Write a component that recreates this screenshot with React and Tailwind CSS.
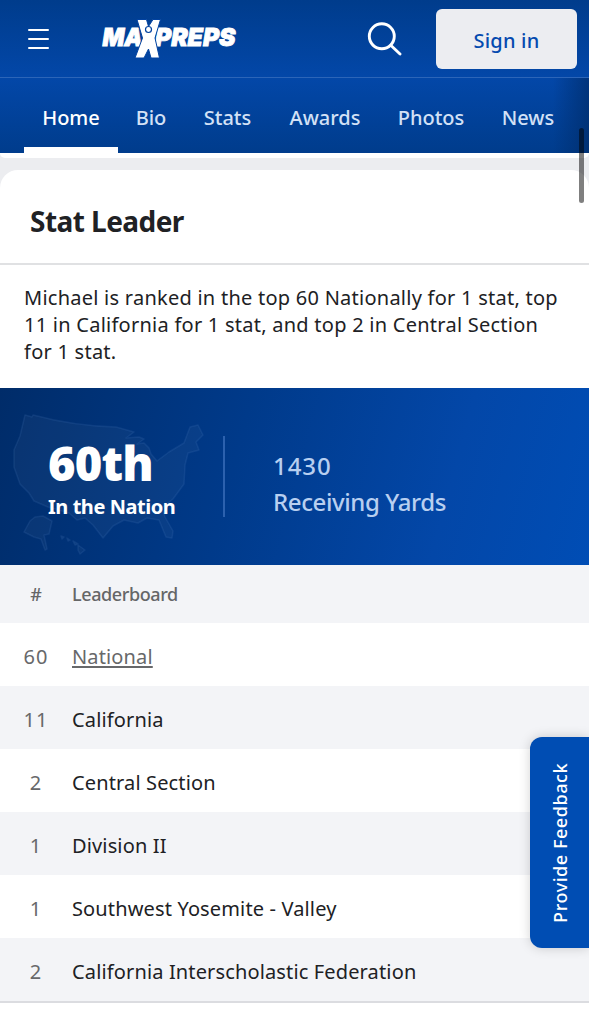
import React from "react";

const tabs = [
  { label: "Home", width: "w-[94px]", active: true },
  { label: "Bio", width: "w-[66px]" },
  { label: "Stats", width: "w-[87px]" },
  { label: "Awards", width: "w-[108px]" },
  { label: "Photos", width: "w-[104px]" },
  { label: "News", width: "w-[90px]" },
];

const leaderboard = [
  { rank: 60, name: "National", link: true },
  { rank: 11, name: "California" },
  { rank: 2, name: "Central Section" },
  { rank: 1, name: "Division II" },
  { rank: 1, name: "Southwest Yosemite - Valley" },
  { rank: 2, name: "California Interscholastic Federation" },
];

const Logo = () => (
  <svg className="w-[140px] h-[44px]" viewBox="0 0 140 44" fill="#fff" stroke="#fff">
    <g fontFamily="Inter, 'Liberation Sans', sans-serif" fontWeight="900" fontStyle="italic" fontSize="25" strokeWidth="0.9">
      <text x="2.500" y="29" textLength="40" lengthAdjust="spacingAndGlyphs">MA</text>
      <text x="55" y="29" textLength="80.500" lengthAdjust="spacingAndGlyphs">PREPS</text>
    </g>
    {/* Athlete with raised arms standing in for the X */}
    <path
      d="M37 2.500h9.500l2 7 4.500-7h7.500L55 21l4.500 20H51l-2.500-9-4.500 9h-9L42.500 21z"
      stroke="#0242a0"
      strokeWidth="1"
    />
    <circle cx="48.500" cy="12.500" r="3" stroke="#0242a0" strokeWidth="1.200" />
  </svg>
);

const Header = () => (
  <header className="h-[78px] flex items-center border-b border-[#2c65b8] bg-gradient-to-b from-[#003c8c] to-[#0347a8]">
    <button className="ml-7 w-[22px] h-5 flex flex-col justify-between" aria-label="Menu">
      <span className="h-0.5 w-[21px] rounded bg-white" />
      <span className="h-0.5 w-[21px] rounded bg-white" />
      <span className="h-0.5 w-[21px] rounded bg-white" />
    </button>
    <div className="ml-[50px]">
      <Logo />
    </div>
    <button className="ml-[126px]" aria-label="Search">
      <svg className="w-9 h-9" viewBox="0 0 36 36" fill="none" stroke="#fff" strokeWidth="2.900" strokeLinecap="round">
        <circle cx="15.800" cy="15.300" r="12.500" />
        <path d="M25 24.500L34 33" />
      </svg>
    </button>
    <button className="ml-[34px] w-[141px] h-[60px] pt-1 rounded-md bg-[#ecedf1] text-[#054aaf] text-xl font-medium tracking-[0.2px]">
      Sign in
    </button>
  </header>
);

const Tabs = () => (
  <nav className="relative h-[75px] pl-6 flex bg-gradient-to-b from-[#0347a8] to-[#003c8c]">
    {tabs.map((tab) => (
      <a
        key={tab.label}
        className={`${tab.width} shrink-0 flex items-center justify-center pt-[11px] text-xl font-medium whitespace-nowrap border-b-[6px] ${
          tab.active ? "text-white border-white" : "text-[#d3e1f6] border-transparent"
        }`}
      >
        {tab.label}
      </a>
    ))}
    <div className="absolute right-0 top-0 h-full w-9 bg-gradient-to-r from-transparent to-[#002c69]/70" />
  </nav>
);

const RankBanner = () => (
  <div className="relative h-[177px] flex items-center bg-[linear-gradient(105deg,#002c69_0%,#003a8a_40%,#0347a8_75%,#004db5_100%)]">
    <svg
      className="absolute left-0 top-0 w-[240px] h-[177px]"
      viewBox="0 0 240 177"
      fill="#fff"
      fillOpacity="0.035"
      stroke="#5f8fd0"
      strokeOpacity="0.14"
      strokeWidth="1.500"
      strokeLinejoin="round"
    >
      <path d="M25 27L32 29 33 27Q74 38 116 39L134 44 126 50 139 49 144 51 137 56 144 55 149 60 151 66 157 73 169 64 184 55 190 39 198 37 203 47 196 54 199 62 188 65 185 77 184 96 173 111 162 120 165 129 173 143 172 150 166 149 159 132 147 130 138 135 124 132 113 138 103 150 93 137 85 130 77 132 69 125 48 119 34 113 29 105 20 96 14 79 14 62 20 48z" />
      <path d="M24 144L30 133 35 129 43 128 52 133 49 146 44 147 47 161 45 162 41 151 34 149z" />
      <path d="M61 148l3 1-2 2zM67 150l3 2-2 1zM73 153l5 3-3 1zM78 157l7 5-5 4-2-4z" />
    </svg>
    <div className="relative w-[223px] pl-12 text-white font-bold">
      <div className="mt-[5px] text-[47px] leading-[50px] font-black tracking-[-0.8px]">60th</div>
      <div className="mt-[5px] text-xl leading-7 tracking-[-0.45px] whitespace-nowrap">In the Nation</div>
    </div>
    <div className="relative w-0.5 h-[81px] bg-[#2c61ae]" />
    <div className="relative ml-12 mt-3.5 text-2xl leading-9 font-medium text-[#b8cff0]">
      <div className="tracking-[0.9px]">1430</div>
      <div className="tracking-[-0.4px]">Receiving Yards</div>
    </div>
  </div>
);

const Leaderboard = () => (
  <div className="border-b-2 border-[#dbdce0]">
    <div className="h-[58px] flex items-center bg-[#f3f4f7] text-[#656667] text-lg font-medium">
      <div className="w-[72px] text-center">#</div>
      <div className="tracking-[-0.4px]">Leaderboard</div>
    </div>
    {leaderboard.map((row) => (
      <div key={row.name} className="h-[63px] pt-[5px] flex items-center text-xl tracking-[0.14px] odd:bg-[#f3f4f7] even:bg-white">
        <div className="w-[72px] text-center text-[#67686a] tracking-[1px]">{row.rank}</div>
        <div className={row.link ? "text-[#67686a] underline underline-offset-2" : "text-[#202124]"}>
          {row.name}
        </div>
      </div>
    ))}
  </div>
);

const App = () => {
  return (
    <div className="relative w-[589px] h-[1011px] overflow-hidden bg-white font-['Noto_Sans',sans-serif]">
      <Header />
      <Tabs />

      <div className="bg-[#ecedf0]">
        <div className="h-[5px] mb-3 rounded-b-[16px] bg-white" />
        <section className="rounded-t-[18px] bg-white">
          <h2 className="h-[95px] pl-[30px] pt-2 flex items-center border-b-2 border-[#e0e1e3] text-[28px] font-bold tracking-[-0.55px] text-[#202124]">
            Stat Leader
          </h2>
          <p className="h-[123px] pl-6 pt-[19px] text-xl leading-[27px] tracking-[0.25px] text-[#202124] whitespace-nowrap">
            Michael is ranked in the top 60 Nationally for 1 stat, top
            <br />
            11 in California for 1 stat, and top 2 in Central Section
            <br />
            for 1 stat.
          </p>
        </section>
      </div>
      <RankBanner />
      <Leaderboard />

      {/* Feedback tab pinned to the right edge */}
      <button className="absolute right-0 top-[737px] w-[59px] h-[211px] rounded-l-xl bg-[#004db3] shadow-[0_0_12px_rgba(0,0,0,0.18)] flex items-center justify-center">
        <span className="[writing-mode:vertical-rl] rotate-180 text-lg font-medium text-white tracking-[0.55px] whitespace-nowrap">
          Provide Feedback
        </span>
      </button>

      {/* Scrollbar thumb */}
      <div className="absolute left-[579px] top-32 w-[5px] h-[75px] rounded-full bg-black/50" />
    </div>
  );
};

export default App;
